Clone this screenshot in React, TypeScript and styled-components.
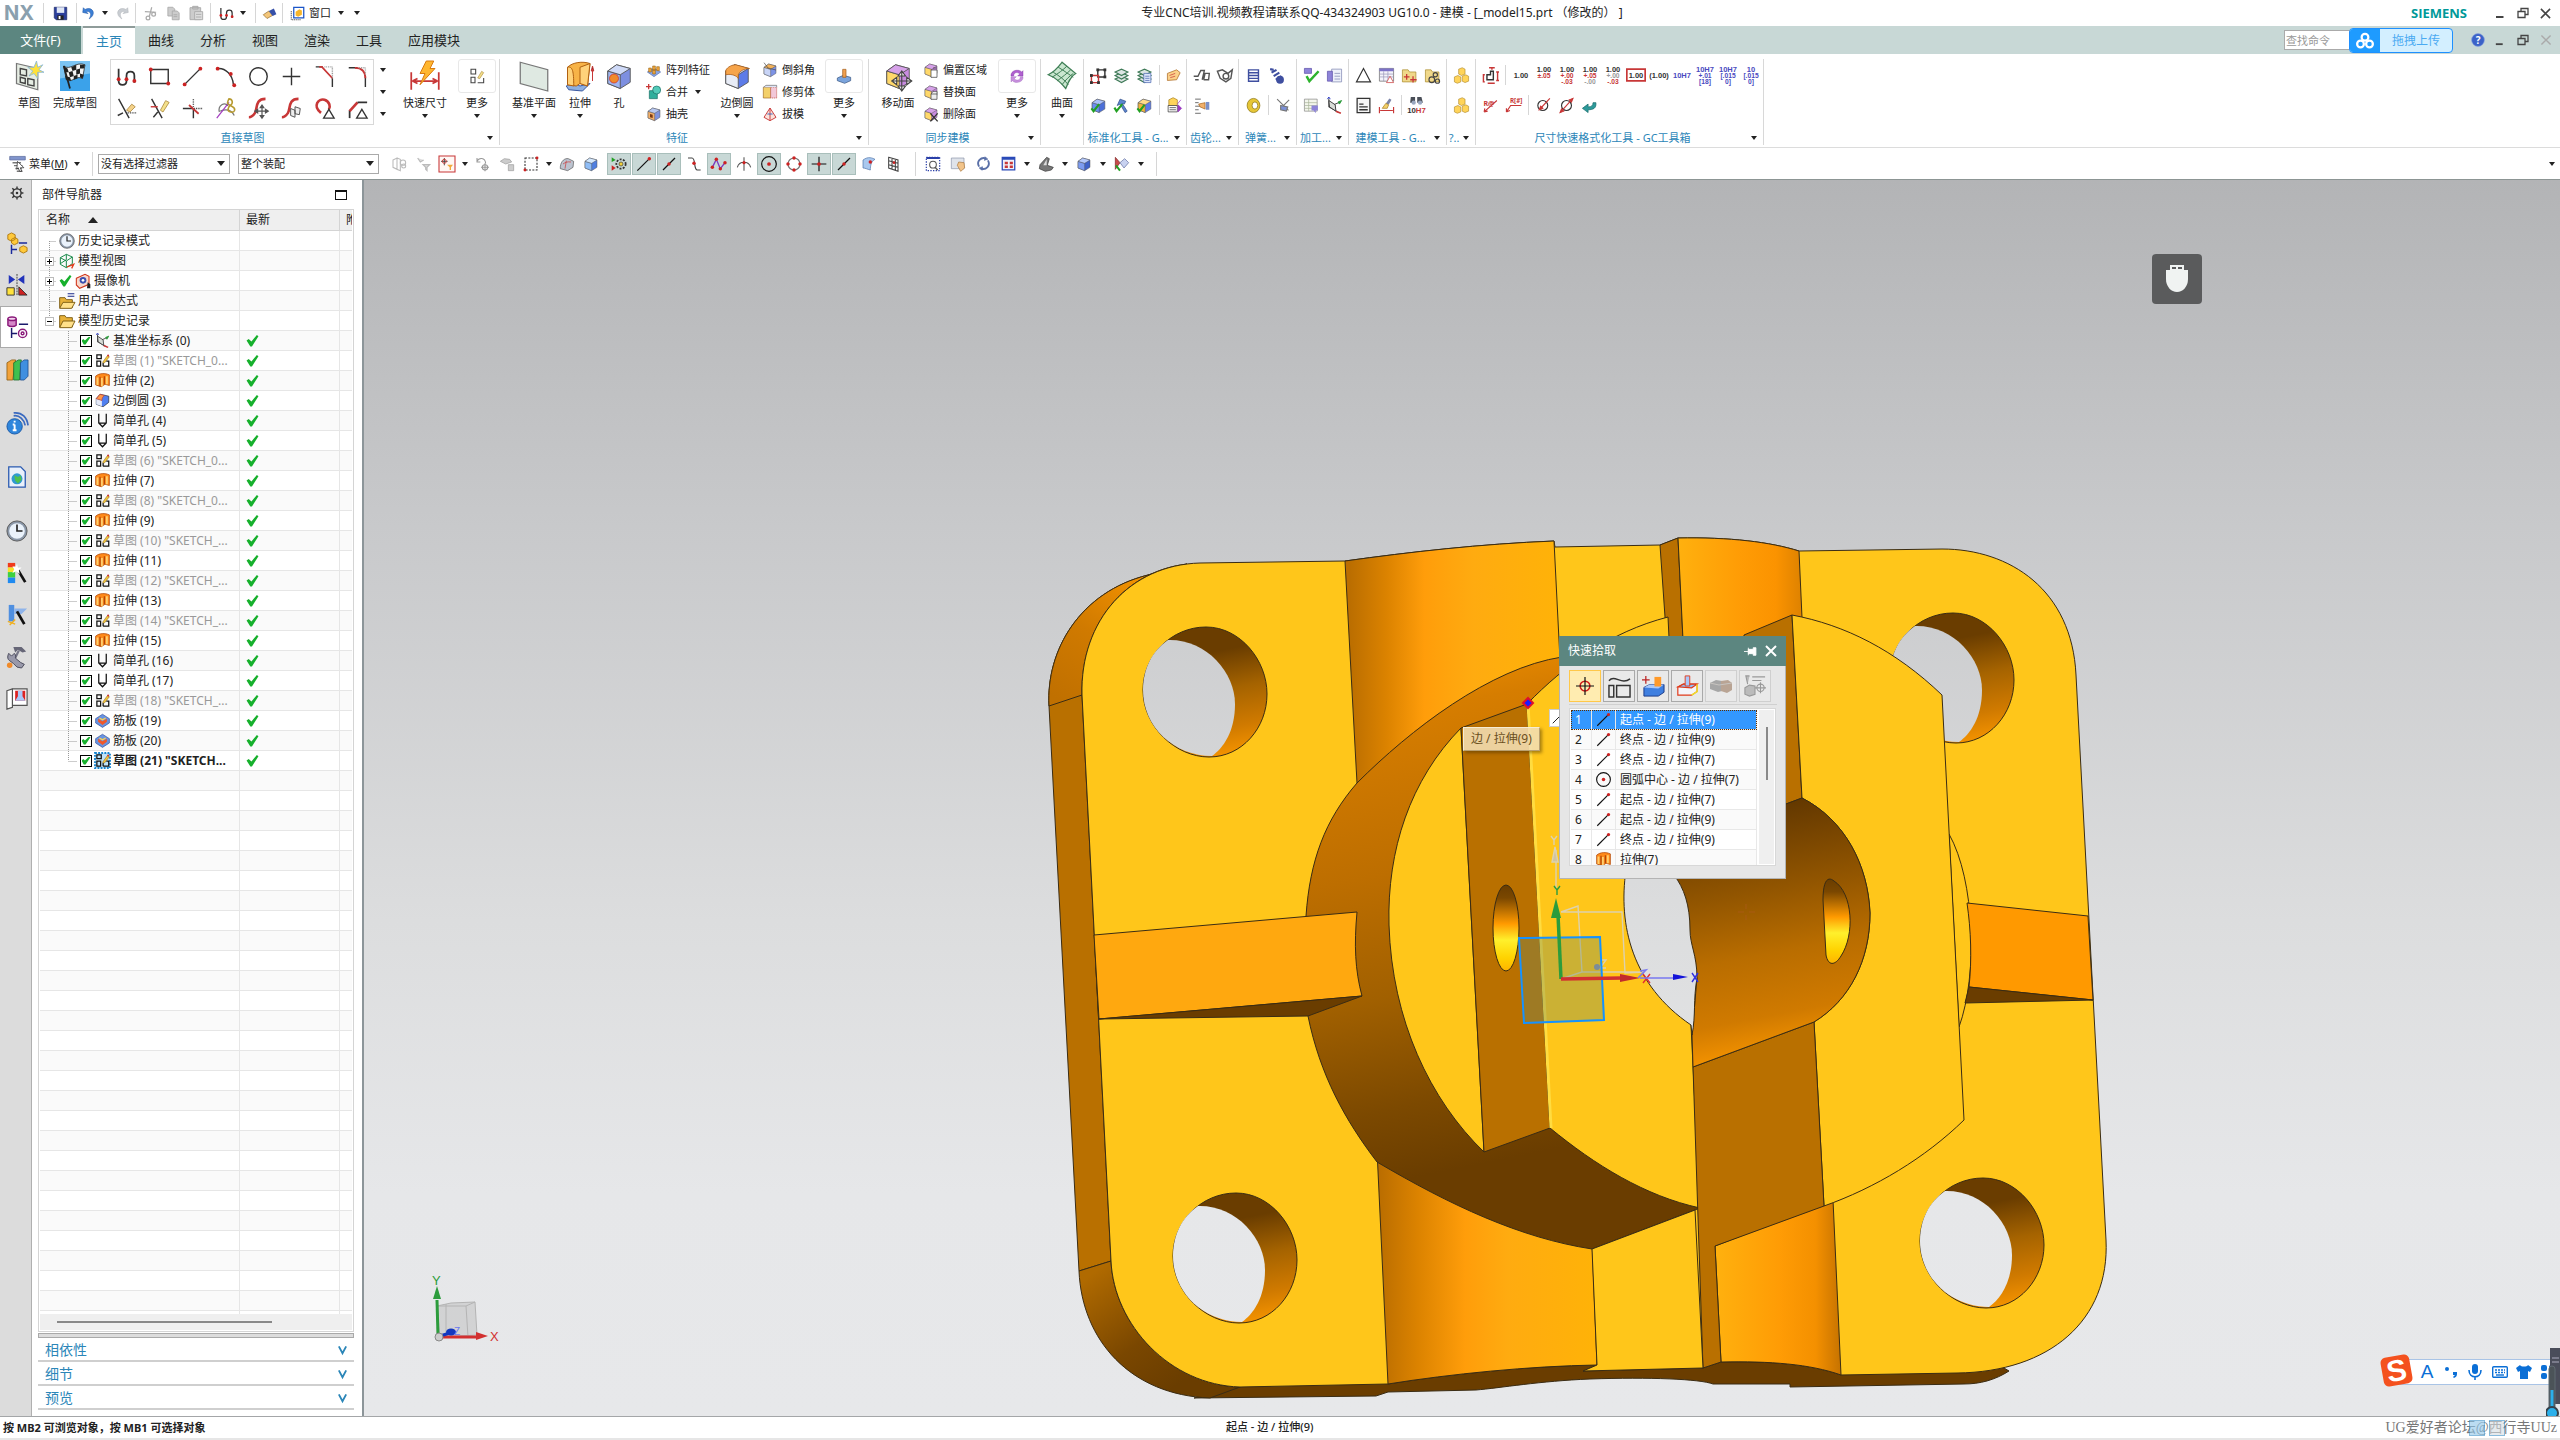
import React from "react";
import styled, { createGlobalStyle, css } from "styled-components";

const Global = createGlobalStyle`
  html, body, #root { height: 100%; }
  body { margin: 0; overflow: hidden; background: #fff; }
  *, *::before, *::after { box-sizing: border-box; }
  body, button, input, select, table {
    font-family: "Noto Sans", "Noto Sans CJK SC", sans-serif;
    font-size: 11px; line-height: 16px; color: #222;
  }
  button { border: 0; background: none; padding: 0; }
`;

/* ---------- icon drawings, each on a 24 x 24 grid ---------- */
const K = "#333";
const R = "#c83737";
const st = (stroke: string, strokeWidth = 1.6) => ({ fill: "none", stroke, strokeWidth });
const dot = (x: number, y: number, r = 2.2) => <circle cx={x} cy={y} r={r} fill="#cc2222" stroke="none" />;
const cube = (a: string, b: string, c: string) => (
  <g stroke="#555" strokeWidth=".7" strokeLinejoin="round">
    <path d="M3 8l7-5 11 3v11l-8 5-10-4z" fill={a} />
    <path d="M3 8l10 3v11l-10-4z" fill={b} />
    <path d="M3 8l7-5 11 3-8 5z" fill={c} />
  </g>
);
const binder = (c: string) => <g fill="#dde6e4" stroke={c} strokeWidth="1.6">{[17, 12, 7].map((y) => <path key={y} d={`M3 ${y}l9-4 9 4-9 5z`} />)}</g>;
const dimText = (main: string, color = K, a?: string, b?: string, ac = R, bc = R) => (
  <g fontFamily="Liberation Sans" fontWeight="700" textAnchor="middle">
    <text x="12" y={a ? 8 : 15} fontSize="9" fill={color}>{main}</text>
    {a && <text x="12" y="16" fontSize="8" fill={ac}>{a}</text>}
    {b && <text x="12" y="23" fontSize="8" fill={bc}>{b}</text>}
  </g>
);
const sketchGlyph = (
  <g {...st("#111", 2)}>
    <path d="M3 3h7v6H3zM3 13h6v8H3zM13 21h9v-8h-4M13 21v-5" />
    <path d="M12 15l8-11 3 2-8 10z" fill="#f6c63a" stroke="#7a5a10" strokeWidth=".8" />
    <circle cx="21" cy="4" r="1.6" fill="#c33" stroke="none" />
  </g>
);

const icons: Record<string, React.ReactNode> = {
  save: <g><path d="M2 2h20v20H5l-3-3z" fill="#2b3f9c" stroke="#14205c" /><path d="M6 2h12v9H6z" fill="#dfe6f5" /><path d="M7 15h10v7H7z" fill="#222" /><path d="M9 16h3v5H9z" fill="#fff" /></g>,
  undo: <path d="M3 11l1-8 3 3c7-4 15 0 14 7-1 5-4 7-7 9 3-5 4-9 0-12-2-1-4-1-5 0l3 3z" fill="#3c7fd6" stroke="#2259a8" />,
  redo: <path d="M21 11l-1-8-3 3C10 2 2 6 3 13c1 5 4 7 7 9-3-5-4-9 0-12 2-1 4-1 5 0l-3 3z" fill="#c9cdd2" stroke="#b3b7bc" />,
  cut: <g {...st("#aaa", 2)}><path d="M14 2l-4 15M3 9l18 1" /><circle cx="8" cy="19" r="3" /><circle cx="17" cy="13" r="3" /></g>,
  copy: <g fill="#ccc" stroke="#aaa" strokeWidth="1.4"><path d="M3 2h8l3 3v11H3z" /><path d="M10 8h8l3 3v11H10z" /><path d="M12 14h6M12 17h6" /></g>,
  paste: <g fill="#ccc" stroke="#aaa" strokeWidth="1.4"><path d="M3 4h16v18H3zM7 2h8v4H7z" /><path d="M10 10h12v12H10z" fill="#ddd" /><path d="M12 14h8M12 18h8" /></g>,
  profile: <g {...st(K, 2)}><path d="M3 3v14c0 6 9 6 9 0v-6c0-6 9-6 9 0v8" />{dot(3, 15)}{dot(12, 15)}{dot(21, 17)}</g>,
  eraser: <g><path d="M2 14l9-6 6 7-9 5z" fill="#f3c67a" stroke="#8a6020" /><path d="M11 8l8-4 4 9-6 3z" fill="#3650a8" /></g>,
  window: <g><path d="M2 8v14h16" {...st("#444", 1.4)} strokeDasharray="2 1" /><path d="M6 2h16v17H6z" fill="#fff" stroke="#1b55c8" strokeWidth="2" /><path d="M9 9l6-4 4 2v7l-6 3-4-2z" fill="#f7b52a" /></g>,
  sketch: <g><path d="M2 2l17 4v17L2 18z" fill="#e6ede4" stroke="#777" /><path d="M5 6l5 1v5l-5-1zM5 13l4 1v4l-4-1zM11 14l5 1v5l-5-1z" {...st("#444", 1.1)} /><path d="M18 0l1 5 4-2-3 4 4 2-5 0 0 5-3-4-4 2 3-4-4-3 5 0z" fill="#ffe23c" stroke="#8bb8d8" strokeWidth=".7" /></g>,
  finish: <g><path d="M0 0h24v24H0z" fill="#3ba2ea" /><path d="M0 0h24v10L0 14z" fill="#7cc4f3" /><path d="M3 4c5 4 10-4 17-1l-2 11c-6-3-8 4-13 1z" fill="#f4f4f4" stroke="#222" strokeWidth=".6" /><path d="M3 4l3 2 1 3-3 0zM9 5l4-2 0 4-3 1zM16 3l4 0-1 3-3 0zM7 9l3-1 1 4-3 1zM13 7l3-1 0 4-3 1zM4 12l4 1 1 3-4-1zM11 12l3-1 0 3-3 1zM16 10l3 1-1 3-2-1z" fill="#222" /><path d="M3 4l5 18" {...st("#222", 1.4)} /></g>,
  rect: <g {...st(K)}><path d="M2 4h20v16H2z" />{dot(2, 4)}{dot(22, 20)}</g>,
  line: <g {...st(K)}><path d="M3 21L21 3" />{dot(3, 21)}{dot(21, 3)}</g>,
  segment: <path d="M3 21L21 3" {...st("#111")} />,
  arc: <g {...st(K)}><path d="M3 3c9-1 17 7 18 18" />{dot(3, 3)}{dot(22, 22)}{dot(18, 9)}</g>,
  circle: <circle cx="12" cy="12" r="10" {...st(K)} />,
  plus: <path d="M12 2v20M2 12h20" {...st(K)} />,
  fillet: <g {...st(K)}><path d="M2 1h8M21 14v10" /><path d="M6 1h3l12 13" stroke={R} strokeWidth="2" /><path d="M12 1h9v12" stroke="#999" strokeDasharray="1 1" /></g>,
  corner: <g {...st(K)}><path d="M2 2h10M21 12v12" /><path d="M9 2c8 0 12 4 12 12" stroke={R} strokeWidth="2" /><path d="M14 2h7v9" stroke="#999" strokeDasharray="1 1" /></g>,
  trim: <g {...st(K)}><path d="M3 1l12 22M2 20l6-3" /><path d="M12 17h11" strokeDasharray="1 1" /><path d="M12 14l6-7 4 3-6 6z" fill="#f4d28a" stroke="#a07828" strokeWidth=".8" /></g>,
  extend: <g {...st(K)}><path d="M3 1l12 22M5 22l5-6" /><path d="M2 10h8" stroke={R} /><path d="M13 14l6-11 4 2-7 11z" fill="#f3e08a" stroke="#a07828" strokeWidth=".8" /></g>,
  mkcorner: <g {...st(K)}><path d="M13 12v11M1 12h11" /><path d="M8 8l11 10" stroke={R} strokeWidth="2" /><path d="M13 1v10M14 12h9" strokeDasharray="1 1" /></g>,
  loop: <g {...st("#777", 1.4)}><path d="M5 16C3 8 11 4 15 9M6 15c8-3 13-1 16 5" /><path d="M2 23L16 5" stroke="#a33ac0" /><path d="M16 1c4 0 5 5 2 7s-5 7 0 8 6-4 2-6-7-3-5-7z" stroke="#b79a30" strokeWidth="1.8" /></g>,
  moveCurve: <g><path d="M20 1C8 1 11 12 8 17c-2 3-4 5-7 5" {...st(R, 3)} /><path d="M16 8v15M8 15h15M16 8l-2 3h4zM16 23l-2-3h4zM8 15l3-2v4zM23 15l-3-2v4z" fill="#555" stroke="#555" strokeWidth="1.4" /></g>,
  offsetCurve: <g><path d="M20 1C8 1 11 12 8 17c-2 3-4 5-7 5" {...st(R, 3)} /><path d="M11 12l5 2v8l-5-2zM16 10l6 2-1 7-5-1z" fill="#eee" stroke="#444" /></g>,
  arcTri: <g><path d="M8 17C-2 9 5 0 12 2c6 2 7 8 5 11" {...st(R, 3)} /><path d="M17 13l6 10H11z" fill="#fff" stroke={K} strokeWidth="1.5" /></g>,
  chamTri: <g><path d="M3 23v-9" {...st(K, 2)} /><path d="M3 15L12 5" {...st(R, 3)} /><path d="M12 5h11" {...st(K, 2)} /><path d="M17 13l6 10H11z" fill="#fff" stroke={K} strokeWidth="1.5" /></g>,
  rapidDim: <g><path d="M1 9v14M23 9v14M2 16h20M2 16l4-2M2 16l4 2M22 16l-4-2M22 16l-4 2" {...st(R, 1.4)} /><path d="M13 0h6l-3 6h4L8 19l4-9H8z" fill="#ffb62e" stroke="#d87a10" strokeWidth=".8" /></g>,
  more: <g {...st("#444", 1.6)}><path d="M3 2h7v7H3zM3 14h6v8H3zM13 22h9v-7" /><path d="M13 15l6-10 3 2-6 9z" fill="#f3e08a" stroke="#a07828" strokeWidth=".8" /></g>,
  datum: <path d="M1 1l22 6v17L1 18z" fill="#dfe9e2" stroke="#777" />,
  extrude: <g stroke="#b06010" strokeWidth=".8"><path d="M1 20l5-3 6 3 8-2-6 6-11-1z" fill="#8fb0e0" stroke="#3a58a0" /><path d="M2 5c4-4 12-5 18-3l-2 18-6-2-3 2-7-1z" fill="#f7b347" /><path d="M2 5c4-1 5 3 5 15l-5-1zM12 5l8-3-2 18-6-2z" fill="#ffd27a" /><path d="M22 16V6M22 4l-1 4h2z" stroke={R} /></g>,
  hole: <g>{cube("#7d8fe0", "#9fb6f2", "#cfdaf8")}<circle cx="8" cy="14" r="3.6" fill="#f08a2a" stroke="#c33" strokeWidth=".6" /></g>,
  pattern: <g fill="#f2a63a" stroke="#8a5a10" strokeWidth=".8"><path d="M2 15l10-6 10 6-10 7z" fill="#8aa7e4" stroke="#4560a8" /><path d="M4 9h4v6H4zM10 6h4v6h-4zM10 12h4v6h-4zM16 7h4v6h-4z" /></g>,
  unite: <g><path d="M5 10h12v12H5z" fill="#2fae9c" stroke="#136a60" /><circle cx="16" cy="9" r="6" fill="#53cbb9" stroke="#136a60" /><path d="M4 0v8M0 4h8" {...st(R, 2)} /></g>,
  shell: <g>{cube("#7f93de", "#f3b06a", "#b8c8f2")}<path d="M6 12l4 1v5l-4-1z" fill="#7a3a14" /></g>,
  blend: <g>{cube("#5c7be8", "#e8ecf6", "#c8d6f8")}<path d="M3 8c0-2 4-5 8-5l11 3c-4 0-8 2-9 5v3c-1-2-5-4-10-3z" fill="#f6a44a" stroke="#a85c18" strokeWidth=".6" /></g>,
  chamfer: <g>{cube("#7d93e6", "#c8d4f6", "#f2b25a")}<path d="M3 1l6 8 12 3" {...st("#444", 1)} /></g>,
  trimBody: <g><path d="M2 5h11v16H2z" fill="#f3d06a" stroke="#a06a20" /><path d="M13 5h9v16h-9z" fill="#f2c8d8" stroke="#b43" strokeDasharray="2 1" /><path d="M2 5l4-3h16v3" fill="#dfe6f8" stroke="#666" /></g>,
  draft: <g fill="#fbe3dc" stroke={R} strokeWidth="1.4"><path d="M12 3l9 14-9 5-9-5z" /><path d="M12 3v19" /><path d="M8 12l8 0" stroke="#3465c0" /></g>,
  featMore: <g><path d="M2 15l9-4 11 3v5l-9 4-11-4z" fill="#7ba4dc" stroke="#33507c" /><path d="M10 2h5v12h-5z" fill="#f0a050" stroke="#a05a18" /></g>,
  moveFace: <g>{cube("#c88be0", "#ffd86a", "#d7a2ea")}<path d="M15 9v14M8 16h14M15 8l-3 4h6zM15 24l-3-4h6zM7 16l4-3v6zM23 16l-4-3v6z" fill="#eee" stroke="#444" strokeWidth=".9" /></g>,
  offRegion: <g>{cube("#c88be0", "#ffd86a", "#d7a2ea")}<path d="M12 12h9v11h-9zM15 9h6" fill="#fff" stroke="#333" /></g>,
  repFace: <g>{cube("#c88be0", "#ffd86a", "#d7a2ea")}<path d="M12 15h9v8h-9zM12 15l3-4h6v4" fill="#eee" stroke="#333" /></g>,
  delFace: <g>{cube("#c88be0", "#ffd86a", "#d7a2ea")}<path d="M11 11l11 12M22 11L11 23" {...st("#333", 2)} /></g>,
  syncMore: <g fill="#b060d0" stroke="#7a2fa0" strokeWidth=".6"><path d="M3 12C2 3 15 1 19 6l2-2v8h-8l3-3c-4-4-9-2-9 3z" /><path d="M21 13c1 9-12 11-16 6l-2 2v-8h8l-3 3c4 4 9 2 9-3z" opacity=".7" /></g>,
  surface: <g><path d="M1 11C7 8 9 5 12 1l11 9c-4 2-6 7-8 12C11 17 6 13 1 11z" fill="#c9e6cf" stroke="#3f7f56" /><path d="M5 9c5 3 9 6 12 10M9 5c5 3 9 6 12 8M4 13C9 10 13 7 16 4M8 16c4-3 8-6 11-9M12 19c3-4 6-7 9-9" {...st("#3f7f56", .8)} /></g>,
  snapBox: <g {...st("#333", 2)}><path d="M11 4h10v10H11z" /><path d="M2 12h10v10H2z" stroke={R} />{[[11, 4], [21, 4], [21, 14], [2, 12], [2, 22], [12, 22]].map(([x, y]) => <path key={`${x}-${y}`} d={`M${x - 1} ${y - 1}h2v2h-2z`} />)}</g>,
  layers: binder("#3f7a58"),
  layerList: <g>{binder("#3f7a58")}<path d="M11 9h10v13H11z" fill="#dce6fa" stroke="#4763b0" /><path d="M13 13h6M13 16h6M13 19h6" stroke="#4763b0" /></g>,
  tag: <g><path d="M2 9l13-5 5 4-5 10-13 1z" fill="#fbd18a" stroke="#a8651c" /><path d="M5 12l8-3M6 15l7-2" stroke={R} /></g>,
  blueTick: <g>{cube("#4b6fd8", "#6a8ef0", "#a9c0fa")}<path d="M2 16l3 4 8-10" {...st("#22a022", 3)} /></g>,
  hammerTick: <g><path d="M10 3l8 3-2 4-3-1 7 11-3 2-7-12-4 2z" fill="#5b86d0" stroke="#2a4a88" /><path d="M2 15l3 5 8-10" {...st("#22a022", 3)} /></g>,
  goldTick: <g>{cube("#5c7be8", "#f2b53a", "#ffdb8a")}<path d="M2 16l3 4 7-9" {...st("#22a022", 3)} /></g>,
  partEdit: <g><path d="M4 4l6-3 6 3v9H4z" fill="#ffd55a" stroke="#a8801c" /><path d="M3 12h13v9H3z" fill="#fff" stroke="#333" /><path d="M5 15h9M5 18h9" stroke="#333" /><path d="M16 10l5-6M17 21l5-5-5-5z" fill="#9a3ac0" stroke="#9a3ac0" /></g>,
  gear1: <g {...st("#555", 2)}><path d="M1 13h6l4-8h5l-3 13M15 18h7l1-9h-6l-2 9M3 18h5" /></g>,
  gear2: <g {...st("#555", 2)}><path d="M2 6l4 10 8 5 7-5 2-12-6 5-8-5z" /><circle cx="14" cy="13" r="4" /></g>,
  listHand: <g><path d="M3 3h8M3 8h5M3 13h8M3 18h5M3 23h8" stroke="#333" /><path d="M8 10l9-2v9l-7-3z" fill="#f2b06a" stroke="#a8641c" /><path d="M18 7h5v11h-5z" fill="#7b90c8" /></g>,
  spring: <g {...st("#3f4fa0", 2)}><path d="M5 4h14M5 8h14M5 12h14M5 16h14M5 20h14M5 3v18M19 3v18" /></g>,
  spring2: <g {...st("#3f4fa0", 3)}><path d="M3 3l5 1M5 8l7-4M8 13l8-5M11 18l8-5" /><circle cx="17" cy="18" r="4" fill="#3f4fa0" /></g>,
  disc: <g><ellipse cx="12" cy="12" rx="9" ry="10" fill="#e6c637" stroke="#8a7310" /><ellipse cx="14" cy="12" rx="4" ry="5" fill="#fff" stroke="#8a7310" /></g>,
  springCut: <g {...st("#777", 1.6)}><path d="M3 3l16 16M20 4L8 16" /><path d="M8 12l10 2-2 6-8-2z" fill="#7b90d8" /></g>,
  procTick: <g><path d="M2 2h10v7H2z" fill="#8d83d8" stroke="#5a4ea8" /><path d="M5 13l4 7L22 6" {...st("#2db32d", 3.4)} /></g>,
  procList: <g><path d="M8 3h14v18H8z" fill="#eef1fa" stroke="#7b84b0" /><path d="M12 9h8M12 13h8M12 17h8" stroke="#7b84b0" /><path d="M2 6h7v14H2z" fill="#8d83d8" stroke="#5a4ea8" /></g>,
  procTable: <g><path d="M2 3h18v17H2z" fill="#f3f6ec" stroke="#888" /><path d="M2 8h18M2 12h18M2 16h18M8 3v17" stroke="#a9b49a" /><path d="M12 12h9v7h-3v4l-3-4h-3z" fill="#8d83d8" /></g>,
  csys: <g {...st("#333", 1.3)}><path d="M4 2v12l14 8M4 14l16-7" /><path d="M4 5l9 6 1 9-9-6z" fill="#d9ddd8" /><path d="M17 7l5-2-3 5z" fill="#2a9a3a" stroke="#2a9a3a" /><path d="M14 20l7 3" stroke={R} strokeWidth="2.4" /><path d="M2 3l2-3 2 3" stroke="#2233cc" /></g>,
  tri: <path d="M12 2l10 19H2z" {...st(K, 1.6)} />,
  gridTri: <g><path d="M2 2h20v18H2z" fill="#f4f4fb" stroke="#666" /><path d="M2 2h20v4H2z" fill="#7d73c8" /><path d="M2 10h20M2 14h20M8 6v14M14 6v14" stroke="#9a96b8" /><path d="M17 13l5 9H12z" fill="#fff" stroke={R} /></g>,
  foldPts: <g><path d="M2 4h8l2 3h9v14H2z" fill="#f0d88a" stroke="#a88a2c" /><path d="M8 10v8M4 14h8M17 13v9M13 18h9" {...st(R, 1.8)} /></g>,
  foldLink: <g><path d="M2 4h8l2 3h9v14H2z" fill="#f0d88a" stroke="#a88a2c" /><circle cx="11" cy="18" r="4" {...st("#444")} /><circle cx="19" cy="20" r="3" {...st("#444")} /><circle cx="16" cy="11" r="3" {...st("#444")} /></g>,
  note: <g {...st(K, 1.8)}><path d="M3 2h18v20H3z" fill="#f5f5f5" /><path d="M6 10h6M6 14h12M6 18h12" /></g>,
  dimBrush: <g><path d="M2 14v9M22 14v9M3 19h18" {...st(R, 1.6)} /><path d="M16 2l3 2-4 7-4-2z" fill="#7b84a8" /><path d="M11 9l4 2-2 5H6z" fill="#f2d06a" stroke="#a8801c" /></g>,
  find: <g><path d="M4 0h6v8H3zM13 0h6l2 8h-8z" fill="#4a4f58" /><circle cx="8" cy="8" r="3" fill="#9aa8c0" /><circle cx="17" cy="8" r="3" fill="#9aa8c0" /><text x="12" y="23" fontSize="11" fontFamily="Liberation Sans" fontWeight="700" textAnchor="middle" fill={K}>10<tspan fill={R}>H7</tspan></text></g>,
  gold: <g fill="#ffd45a" stroke="#a8801c" strokeWidth=".8"><path d="M8 3l5-2 4 2v7l-5 2-4-2z" /><path d="M2 14l5-2 4 2v7l-5 2-4-2zM13 13l5-2 4 2v7l-5 2-4-2z" /></g>,
  dimFrame: <g {...st(K, 2)}><path d="M7 18V11h5V6h4v12z" /><path d="M10 1h8M14 1v3M2 12v8M1 11h3M1 21h3M22 7v12M20 7h4M20 19h4M8 23h10" stroke={R} /></g>,
  d1: dimText("1.00"),
  d2: dimText("1.00", K, "±.05"),
  d3: dimText("1.00", K, "+.00", "-.03"),
  d4: dimText("1.00", K, "+.05", "-.00", R, "#999"),
  d5: dimText("1.00", K, "+.00", "-.03", "#999"),
  d6: <g><path d="M1 5h22v14H1z" {...st(R, 2)} />{dimText("1.00")}</g>,
  d7: <g>{dimText("(1.00)")}</g>,
  d8: dimText("10H7", "#4a4ac0"),
  d9: dimText("10H7", "#4a4ac0", "+.01", "[18]", "#4a4ac0", "#4a4ac0"),
  d10: dimText("10H7", "#4a4ac0", "[.015", "0]", "#4a4ac0", "#4a4ac0"),
  d11: dimText("10", "#4a4ac0", "[.015", "0]", "#4a4ac0", "#4a4ac0"),
  leader1: <g {...st(R, 1.6)}><path d="M3 21L21 5M3 21l1-5M3 21l5-1" /><text x="2" y="12" fontSize="10" fontWeight="700" stroke="none" fill={R}>R@</text></g>,
  leader2: <g {...st(R, 1.6)}><path d="M2 21l6-9h15M2 21l0-5M2 21l5-2" /><text x="7" y="9" fontSize="9" fontWeight="700" stroke="none" fill={R}>R[#]</text></g>,
  dia1: <g {...st(K, 1.6)}><circle cx="11" cy="12" r="7" /><path d="M6 18L21 2" stroke={R} /><path d="M6 18l5-2-3-3z" fill={R} stroke={R} /></g>,
  dia2: <g {...st(K, 1.6)}><circle cx="12" cy="12" r="7" /><path d="M3 22L21 2" stroke={R} /><path d="M3 22l5-2-3-3zM21 2l-5 2 3 3z" fill={R} stroke={R} /></g>,
  back: <path d="M21 8c1 8-4 10-11 10v4l-8-6 8-6v4c5 0 7-2 7-6z" fill="#2c9a9a" stroke="#176a6a" />,
  menu: <g><path d="M1 2h22v5H1z" fill="#8094cc" stroke="#5a6a9c" /><path d="M5 11h12M7 15h12M9 19h9M11 23h8" {...st("#777", 2)} /><path d="M12 9l9 9-5 0 2 5-3 0-2-5-2 2z" fill="#fff" stroke="#222" /></g>,
  cubeGray: <g {...st("#bbb", 1.6)}><path d="M3 6l6-3v17l-6-3zM9 3l5 2v17l-5-2z" /><circle cx="18" cy="10" r="4" /><circle cx="19" cy="15" r="3" /></g>,
  filterGray: <g {...st("#bbb", 1.8)}><path d="M4 3l4 6 5-3M12 13h10l-4 4v5l-2-2v-3z" fill="#ddd" /></g>,
  filterRed: <g><path d="M0 0h24v24H0z" fill="#fff7f4" stroke={R} strokeWidth="1.6" /><path d="M8 3v11M3 8h10" {...st("#444", 1.4)} /><circle cx="8" cy="8" r="3" {...st(R, 1.4)} /><path d="M12 13h9l-3 4v4h-2v-4z" fill="#f2a83a" /></g>,
  undoGray: <g {...st("#999", 1.6)}><path d="M3 8c3-6 12-6 13 3M3 3v6h5M15 11v12M9 17h12" /><circle cx="15" cy="17" r="4" /></g>,
  handGray: <g fill="#ccc" stroke="#999"><path d="M2 8l6-4 8 1 3 4-9 3z" /><path d="M14 13h8v9h-8z" /></g>,
  marquee: <g><path d="M3 3h18v18H3z" {...st("#333", 1.6)} strokeDasharray="3 2" />{dot(3, 21)}{dot(21, 3)}</g>,
  bodyGray: <g><path d="M2 16C3 7 9 3 14 4l8 4-1 9-8 5-11-3z" fill="#bcc3cf" stroke="#555" /><path d="M6 12c3-2 6-4 12-3M9 19l2-12" {...st("#c33", 1)} /></g>,
  cubeBlue: cube("#4f7fe0", "#8fbdf6", "#d4e8fc"),
  snapAll: <g><circle cx="15" cy="12" r="7" {...st("#333", 2.6)} strokeDasharray="3 2" /><circle cx="15" cy="12" r="3" fill="#f2d23a" stroke="#333" /><path d="M1 2v7l6-3z" fill="#22a022" /><path d="M1 14v8l6-4z" fill="#cc2222" /></g>,
  snapEnd: <g {...st("#111", 1.8)}><path d="M2 22L19 5" />{dot(20, 4, 2.6)}</g>,
  snapMid: <g {...st("#111", 1.8)}><path d="M3 21L21 3" />{dot(12, 12, 2.6)}</g>,
  snapCurve: <g {...st("#444", 1.8)}><path d="M3 3h6c6 0 2 18 8 18h5" />{dot(12, 11, 2.6)}</g>,
  snapPole: <g {...st("#7a3ac0", 2)}><path d="M2 17L8 5l6 14 7-9" />{dot(8, 5, 2.6)}{dot(2, 17, 2.6)}{dot(14, 19, 2.6)}{dot(21, 10, 2.6)}</g>,
  snapCross: <g {...st("#555", 1.6)}><path d="M12 2v20M2 17c3-10 17-10 20 0" />{dot(12, 10, 2.4)}</g>,
  snapCenter: <g {...st("#111", 1.8)}><circle cx="12" cy="12" r="11" />{dot(12, 12, 2.8)}</g>,
  snapQuad: <g {...st("#777", 1.8)}><circle cx="12" cy="12" r="9" />{dot(12, 3, 2.6)}{dot(12, 21, 2.6)}{dot(3, 12, 2.6)}{dot(21, 12, 2.6)}</g>,
  snapPoint: <g {...st("#111", 1.8)}><path d="M12 1v22M1 12h22" />{dot(12, 12, 2.8)}</g>,
  snapFace: <g><path d="M3 6c8-6 14-3 18-1-6 3-7 10-7 16-4-1-8-3-11-3z" fill="#a9c8ee" stroke="#4a6fa8" />{dot(14, 9, 2.6)}</g>,
  snapGrid: <g {...st("#444", 1.6)}><path d="M4 2l14 4v17L4 18zM9 3v17M14 5v17M4 7l14 4M4 13l14 4" />{dot(12, 10, 2)}</g>,
  fit: <g><path d="M2 2h20v20H2z" {...st("#2a3fa8", 1.8)} strokeDasharray="2 2" /><path d="M2 3h20" {...st("#2a3fa8", 3)} /><circle cx="12" cy="13" r="5" fill="#fff" stroke="#555" strokeWidth="1.6" /><path d="M15 17l4 4" {...st("#555", 2)} /></g>,
  pan: <g><path d="M2 3h19v16H2z" fill="#dfe3ea" stroke="#8a93a8" /><path d="M11 14l2-5 8 1 1 8-6 5z" fill="#f2c48a" stroke="#a8743a" /></g>,
  rotate: <g fill="none" stroke="#5a70a8" strokeWidth="3"><path d="M5 17C0 9 8 1 16 4M19 7c5 8-3 16-11 13" /><path d="M14 1l5 4-6 2M10 23l-5-4 6-2" strokeWidth="1" fill="#5a70a8" /></g>,
  layout: <g><path d="M2 2h20v20H2z" fill="#eef2fb" stroke="#2a4ab8" strokeWidth="2" /><path d="M2 4h20" stroke="#2a4ab8" strokeWidth="4" /><path d="M6 9h5v4H6zM14 9h5v4h-5zM6 15h5v4H6zM14 15h5v4h-5z" fill={R} /></g>,
  shadeMode: <g><path d="M3 13L13 2l4 2-3 10 9 3-3 4-9 2-9-4z" fill="#777" stroke="#333" /><path d="M8 14l5-9v9z" fill="#ddd" /></g>,
  shaded: cube("#3f62c8", "#7d9cf0", "#b4c8fa"),
  section: <g><path d="M2 2l7 8-7 10z" fill="#c84a4a" stroke="#7a2020" /><path d="M9 10l7-6 6 6-7 8z" fill="#c8d2f0" stroke="#5a6a9c" /><path d="M3 14l6 8" {...st("#22a022", 3)} /></g>,
  asm: <g><g fill="#ffc93a" stroke="#b07a10"><path d="M2 3l4-2 4 2v5l-4 2-4-2zM6 8l4-2 3 2v4l-4 2-3-2zM15 17l4-2 4 2v4l-4 2-4-2z" /></g><path d="M6 14v10M6 19h6M14 12h9" {...st("#1a2a9c", 1.6)} /></g>,
  constraint: <g><path d="M3 1v10l7-5zM20 1v10l-7-5z" fill="#2233bb" /><path d="M12 0v24" stroke="#333" strokeDasharray="2 1" /><path d="M1 15h8v8H1z" fill="#ffe23c" stroke="#333" /><path d="M14 14v9h9z" fill="#c22" stroke="#333" /></g>,
  partNav: <g {...st("#8a1a7a", 1.6)}><path d="M1 3v7c2 2 7 2 9 0V3" fill="#d488c8" /><ellipse cx="5.500" cy="3" rx="4.500" ry="2" fill="#f4d4f0" /><circle cx="17" cy="19" r="4.500" /><circle cx="17" cy="19" r="1.500" /><path d="M5 13v11M5 19h6M13 9h10" stroke="#1a1a6c" /></g>,
  books: <g strokeWidth=".8"><path d="M1 5l5-3h4l-3 21H1z" fill="#f2a23a" stroke="#8a5a10" /><path d="M8 5l5-3h3l-2 21H8z" fill="#3fc04f" stroke="#1a6a2a" /><path d="M15 5l4-3h4v17l-4 4h-4z" fill="#3f8fe0" stroke="#1a4a8a" /></g>,
  info: <g><circle cx="9" cy="15" r="8" fill="#2f86dc" stroke="#1a5aa8" /><path d="M9 9v2M9 13v6M7 19h4M7 13h2" {...st("#fff", 2)} /><path d="M8 4c6-1 11 4 12 10M8 1c9-1 14 5 15 13" {...st("#3a6ac0", 1.8)} /></g>,
  globe: <g><path d="M3 1h13l5 5v17H3z" fill="#e9f0fb" stroke="#2a5ab0" strokeWidth="1.4" /><circle cx="12" cy="14" r="6" fill="#2f9ad0" /><path d="M9 10l4 2 3-2 1 5-4 4-3-3z" fill="#4fc04f" /></g>,
  clock: <g><circle cx="12" cy="12" r="11" fill="#8a97a8" stroke="#555" /><circle cx="12" cy="12" r="8.500" fill="#eaf2fb" /><path d="M12 5v7h6" {...st("#222", 1.8)} /></g>,
  rainbow: <g><path d="M2 1h8v5H2z" fill="#f03a1a" /><path d="M2 6h8v5H2z" fill="#f6e02a" /><path d="M2 11h8v6H2z" fill="#3fd03f" /><path d="M2 17h8v6H2z" fill="#1f8af0" /><path d="M12 7l9 15" {...st("#111", 3)} /><path d="M12 2l1 4 4 0-3 3 1 4-4-3-4 2 2-4-2-3h4z" fill="#fff" /></g>,
  wand: <g><path d="M3 1h6v18H3z" fill="#4f8fe0" /><path d="M9 5h14l-6 6H9z" fill="#8fb4ea" /><path d="M12 8l8 14" {...st("#111", 3)} /><path d="M2 19l8 3M4 23l6-6" {...st("#f0b020", 1.6)} /></g>,
  tools: <g><path d="M8 1h9l5 5-4 1-5-3-3 3z" fill="#667" /><path d="M14 5l-4 8" {...st("#778", 2.4)} /><path d="M3 8l3 3 2-2 1-1c2 2 2 4 1 5l6 5 4 2-3 4-5-1-4-4-4-3c-2-1-3-4-1-8z" fill="#99a" stroke="#445" /><circle cx="4" cy="21" r="3" fill="#f08a2a" /></g>,
  roles: <g><path d="M1 3l6-2v20l-6 2zM7 1h16v18H7z" fill="#fff" stroke="#555" strokeWidth="1.3" /><path d="M10 3h11v11H10z" fill="#d22" /><path d="M13 3h5v6l3 5H10l3-5z" fill="#a9c8f8" /></g>,
  gearSmall: <g {...st("#333", 2.4)}><circle cx="12" cy="12" r="7" /><circle cx="12" cy="12" r="1" /><path d="M12 1v4M12 19v4M1 12h4M19 12h4M4 4l3 3M17 17l3 3M20 4l-3 3M7 17l-3 3" /></g>,
  views: <g {...st("#1a8a4a", 1.5)}><path d="M2 7l9-5 9 4v10l-9 6-9-5zM2 7l9 5 9-6M11 12v10M11 2v8l-9 6" /><path d="M12 21l10-4-3 6" stroke="#e03a1a" strokeWidth="2" /></g>,
  camera: <g><path d="M2 8l13-6 6 3v12l-14 6-5-5z" fill="#f8d8cc" stroke="#d0341a" strokeWidth="1.6" /><circle cx="12" cy="11" r="5" fill="#3a50b0" /><circle cx="12" cy="11" r="2" fill="#fff" /><path d="M19 14l4 3v6h-5z" fill="#222" /></g>,
  folder: <g><path d="M1 4h8l2 3h9v14H1z" fill="#e8b23a" stroke="#7a5a10" strokeWidth="1.4" /><path d="M1 22l5-10h18l-5 10z" fill="#ffe08a" stroke="#7a5a10" strokeWidth="1.4" /></g>,
  folderEq: <g><path d="M1 7h8l2 3h9v12H1z" fill="#e8b23a" stroke="#7a5a10" strokeWidth="1.4" /><path d="M1 23l5-9h18l-5 9z" fill="#ffe08a" stroke="#7a5a10" strokeWidth="1.4" /><path d="M13 1h10M13 5h10" {...st("#1a2a8a", 1.6)} /></g>,
  skt: sketchGlyph,
  sktOn: <g><path d="M0 0h24v24H0z" fill="#bfe2f8" stroke="#1a86d0" strokeWidth="3" strokeDasharray="3 2" />{sketchGlyph}</g>,
  ext: <g stroke="#b0480a" strokeWidth="1.2"><path d="M1 5c6-5 15-5 22-2v17l-7-2-6 4-9-3z" fill="#ff8a1a" /><path d="M4 7v12M11 8v13M19 5v13" stroke="#ffd070" strokeWidth="3" /><path d="M8 6v15M15 5v13" strokeWidth="2" /></g>,
  rbld: <g><path d="M2 9l6-7 14 3v10l-9 7-11-4z" fill="#4f7ff0" stroke="#222" /><path d="M2 9l9 3v9l-9-3z" fill="#e6ebf8" /><path d="M2 9l6-7 7 2c-3 2-4 5-4 8z" fill="#ff9a4a" stroke="#b33" /></g>,
  drill: <path d="M6 1v15l6 6 6-6V1M6 16h12" {...st("#111", 2)} />,
  rib: <g><path d="M1 9l11-7 11 7v7l-11 7-11-7z" fill="#6a94e0" stroke="#2a4a98" /><path d="M5 9l7 4 7-4v5l-7 5-7-5z" fill="#f0582a" /><path d="M7 8l5 3 5-3" {...st("#ffd24a", 2)} /></g>,
  qpTarget: <g {...st("#111", 1.6)}><circle cx="12" cy="12" r="6.500" stroke="#d01818" strokeWidth="2" /><path d="M12 0v24M0 12h24" /></g>,
  qpCurve: <g {...st("#333", 1.5)}><path d="M1 6c6-7 13 5 22-2M1 11h5v12H1zM9 11h14v12H9z" /></g>,
  qpFeat: <g><path d="M2 13l6-3h15v8l-6 4H2z" fill="#3f7fe0" stroke="#1a3a88" /><path d="M2 13l6-3h15l-6 4z" fill="#a9c8fa" /><path d="M13 2h7v10h-7z" fill="#ff9a2a" /><path d="M4 1v8M0 5h8" {...st("#b22", 1.3)} /></g>,
  qpBody: <g><path d="M2 13l6-3h15v8l-6 4H2z" fill="#f4f4fa" stroke="#e03a1a" strokeWidth="1.3" /><path d="M2 13l6-3h15l-6 4z" fill="#8fc0fa" stroke="#e03a1a" strokeWidth="1.3" /><path d="M10 1h5v11h-5z" fill="#a9c8fa" stroke="#e03a1a" /><path d="M17 22l6-4v-8" {...st("#f0e02a", 1.6)} /></g>,
  qpComp: <g><path d="M1 9l6-3 6 1v10l-4 1-8-3z" fill="#a6a6a6" /><path d="M12 7l7-1 4 3v7l-5 3-6-2z" fill="#b9a494" /><path d="M1 9l9 2 13-2" {...st("#c8c4c0", 1)} /></g>,
  qpPmi: <g {...st("#999", 1.2)}><path d="M1 14l5-3 6 1v9l-6 2-5-2zM4 10L2 1l4 0M9 2h14M9 6h10" fill="#bbb" /><circle cx="18" cy="14" r="4" /><path d="M18 8v12M12 14h12" /></g>,
  pin: <path d="M0 12h8M8 5v14M8 8h9V5h5v14h-5v-3H8z" fill="#fff" stroke="#fff" strokeWidth="1.6" />,
  help: <g><circle cx="12" cy="12" r="11" fill="#3b62c8" stroke="#8aa4e0" /><text x="12" y="18" fontSize="17" fontWeight="700" textAnchor="middle" fill="#fff">?</text></g>,
  min: <path d="M4 20h15" {...st("#444", 4)} />,
  restore: <path d="M8 9V3h14v12h-6M2 9h14v12H2z" {...st("#444", 2.6)} />,
  close: <path d="M2 2l20 20M22 2L2 22" {...st("#444", 3.4)} />,
  closeDim: <path d="M1 1l22 22M23 1L1 23" {...st("#aaa", 3.4)} />,
  cloud: <g {...st("#fff", 3)}><circle cx="12" cy="7" r="4.500" /><circle cx="6" cy="16" r="4.500" /><circle cx="18" cy="16" r="4.500" /></g>,
  chevron: <path d="M4 3l8 15 8-15" {...st("#2b86b8", 4)} />,
};

const Svg = styled.svg<{ $s: number }>`
  display: block; flex: none; overflow: visible;
  width: ${(p) => p.$s}px; height: ${(p) => p.$s}px;
`;
const Icon = ({ n, s = 18 }: { n: string; s?: number }) => (
  <Svg $s={s} viewBox="0 0 24 24" aria-hidden="true">{icons[n]}</Svg>
);

const Caret = styled.i`
  flex: none; width: 0; height: 0; margin: 0 3px;
  border: 3px solid transparent; border-top: 4px solid #222; border-bottom: 0;
`;

/* ---------- frame ---------- */
const Page = styled.div`display: flex; flex-direction: column; height: 100vh; overflow: hidden; background: #fff;`;
const Rule = styled.span<{ $h?: number; $m?: number }>`flex: none; width: 1px; height: ${(p) => p.$h || 20}px; background: #d6d6d6; margin: 0 ${(p) => p.$m || 5}px;`;
const Spacer = styled.span`flex: 1;`;

const TitleBar = styled.header`position: relative; display: flex; align-items: center; height: 26px; flex: none; padding: 0 8px 0 4px;`;
const Brand = styled.strong`width: 34px; font: 700 20px/26px Inter, sans-serif; color: #8aa0ae;`;
const Tool = styled.button<{ $w?: number }>`
  display: flex; align-items: center; justify-content: center; height: 22px; width: ${(p) => p.$w || 24}px; flex: none;
`;
const WindowMenu = styled.button`display: flex; align-items: center; gap: 4px; margin-left: 2px;`;
const Title = styled.h1`
  position: absolute; left: 0; right: 0; top: 0; margin: 0 0 0 204px; text-align: center;
  font-size: 12px; line-height: 26px; font-weight: 400; pointer-events: none; white-space: pre;
`;
const Maker = styled.span`font: 700 13px/26px "Open Sans", sans-serif; color: #009999; margin-right: 26px;`;
const WinButtons = styled.div`display: flex; gap: 10px; align-items: center;`;

const TabBar = styled.nav`position: relative; display: flex; height: 28px; flex: none; background: #c8d8d6; padding-right: 8px;`;
const Tab = styled.button<{ $kind?: "file" | "on" | "wide" }>`
  width: ${(p) => (p.$kind === "file" ? 81 : p.$kind === "wide" ? 78 : 52)}px; font-size: 13px;
  ${(p) => p.$kind === "file" && css`background: #5c8680; color: #fff; margin-right: 2px;`}
  ${(p) => p.$kind === "on" && css`background: #fff; color: #2b86b8; border-top: 2px solid #8f9c9a;`}
`;
const TabTools = styled.div`display: flex; align-items: center; gap: 9px;`;
const Search = styled.input`
  width: 66px; height: 20px; border: 1px solid #aaa; background: #fff; padding: 0 1px; margin-right: 112px; border-radius: 0;
  &::placeholder { color: #999; opacity: 1; }
`;
const Upload = styled.button`
  position: absolute; right: 107px; top: 2px; display: flex; align-items: center; width: 104px; height: 25px;
  border: 1px solid #1e90ff; border-radius: 4px; background: #d3efff; overflow: hidden; color: #4aaaf2; font-size: 12px;
`;
const UploadMark = styled.span`display: grid; place-items: center; width: 30px; height: 25px; background: #1e9bff; margin-right: 12px;`;

/* ---------- ribbon ---------- */
const Ribbon = styled.section`display: flex; height: 94px; flex: none; padding-top: 5px; border-bottom: 1px solid #dcdcdc;`;
const Group = styled.section<{ $w: number }>`
  display: flex; flex-direction: column; flex: none; width: ${(p) => p.$w}px; height: 86px; border-right: 1px solid #d8d8d8;
`;
const GroupBody = styled.div<{ $pad?: number }>`display: flex; align-items: flex-start; height: 71px; padding-left: ${(p) => p.$pad || 0}px;`;
const GroupFoot = styled.footer`display: flex; align-items: center; height: 15px; padding: 0 3px 0 1px; color: #2b86b8;`;
const GroupName = styled.span`flex: 1; text-align: center; white-space: nowrap; line-height: 15px;`;
const BigBtn = styled.button<{ $w: number; $framed?: boolean }>`
  display: flex; flex-direction: column; align-items: center; width: ${(p) => p.$w}px; flex: none; white-space: nowrap; line-height: 14px;
  > span { display: grid; place-items: center; width: 38px; height: 34px; margin-bottom: 3px;
    ${(p) => p.$framed && css`border: 1px solid #e8e8e8; border-radius: 3px;`} }
  > i { margin-top: 4px; }
`;
const Big = ({ n, label, w, caret, framed }: { n: string; label: string; w: number; caret?: boolean; framed?: boolean }) => (
  <BigBtn $w={w} $framed={framed}>
    <span><Icon n={n} s={framed ? 16 : 30} /></span>{label}{caret && <Caret />}
  </BigBtn>
);
const Stack = styled.div<{ $w: number; $pad?: number }>`display: flex; flex-direction: column; width: ${(p) => p.$w}px; padding-left: ${(p) => p.$pad || 0}px; flex: none;`;
const RowBtn = styled.button`display: flex; align-items: center; gap: 4px; height: 22px; line-height: 16px; white-space: nowrap;`;
const Gallery = styled.div`
  display: grid; grid-template-columns: repeat(8, 33px); grid-template-rows: repeat(2, 32px); width: 264px; height: 66px;
  border: 1px solid #d8d8d8; margin-left: 10px; place-items: center; align-content: center; justify-content: center;
`;
const GalleryNav = styled.div`display: flex; flex-direction: column; justify-content: space-around; height: 66px; width: 18px; margin-right: 4px; align-items: center;`;
const MiniRows = styled.div`display: flex; flex-direction: column; gap: 8px; padding-top: 5px;`;
const MiniRow = styled.div`display: flex; align-items: center; height: 22px; padding-left: 3px;`;

const Mini = ({ rows }: { rows: string[][] }) => (
  <MiniRows>
    {rows.map((r, i) => (
      <MiniRow key={i}>
        {r.map((n, j) => (n === "|" ? <Rule key={j} $m={3} /> : <Tool key={j} $w={23} aria-label={n}><Icon n={n} s={n.match(/^d\d/) ? 20 : 17} /></Tool>))}
      </MiniRow>
    ))}
  </MiniRows>
);

/* ---------- selection bar ---------- */
const SelBar = styled.section`display: flex; align-items: center; height: 32px; flex: none; border-bottom: 1px solid #8c9594; padding: 0 2px 0 9px;`;
const MenuBtn = styled.button`display: flex; align-items: center; gap: 3px; width: 78px; white-space: nowrap;`;
const Pick = styled.select<{ $w: number }>`
  appearance: none; width: ${(p) => p.$w}px; height: 20px; border: 1px solid #aaa; border-radius: 0; background: #fff; padding: 0 2px; margin-right: 8px;
`;
const PickWrap = styled.label`position: relative; display: flex; align-items: center; > i { position: absolute; right: 13px; border-width: 4px 4px 0; border-top: 5px solid #222; margin: 0; }`;
const Cluster = styled.div<{ $gap: number }>`display: flex; align-items: center; gap: ${(p) => p.$gap}px; margin-right: 4px;`;
const Toggle = styled.button<{ $on?: boolean }>`
  display: grid; place-items: center; width: 24px; height: 22px; border: 1px solid ${(p) => (p.$on ? "#a9bfbb" : "transparent")};
  background: ${(p) => (p.$on ? "#c8d8d6" : "transparent")};
`;

/* ---------- work area ---------- */
const Work = styled.main`display: flex; flex: 1; min-height: 0;`;
const Strip = styled.nav`width: 32px; flex: none; background: #dcdcdc; border-right: 1px solid #b0b0b0;`;
const StripBtn = styled.button<{ $on?: boolean; $before?: number }>`
  display: grid; place-items: center; width: 100%; height: 42px; margin-top: ${(p) => p.$before || 0}px; padding-left: 3px;
  ${(p) => p.$on && css`background: #fff; border: 1px solid #aaa; border-right: 0;`}
`;
const Panel = styled.aside`display: flex; flex-direction: column; width: 332px; flex: none; border-right: 2px solid #8c9599; padding: 0 8px 6px 6px;`;
const PanelHead = styled.div`display: flex; align-items: center; justify-content: space-between; height: 29px; flex: none; padding: 1px 7px 0 4px; font-size: 12px;`;
const MaxBox = styled.button`width: 12px; height: 10px; border: 1px solid #111; border-top-width: 2px;`;
const TreeBox = styled.div`flex: 1; min-height: 0; display: flex; flex-direction: column; border: 1px solid #d4d4d4; padding: 0 1px 1px;`;
const TreeClip = styled.div`flex: 1; overflow: hidden;`;
const Tree = styled.table`
  width: 100%; table-layout: fixed; border-collapse: separate; border-spacing: 0; font-size: 12px;
  th { height: 21px; padding: 0 6px; text-align: left; font-weight: 400; background: #efefef; border-right: 1px solid #d4d4d4; border-bottom: 1px solid #d4d4d4; overflow: hidden; white-space: nowrap; }
  td { height: 20px; padding: 0; border-right: 1px solid #e6e6e6; border-bottom: 1px solid #e6e6e6; }
  tbody tr:nth-child(even) { background: #fafafa; }
  th:last-child, td:last-child { border-right: 0; }
`;
const SortMark = styled.i`display: inline-block; border: 5px solid transparent; border-bottom: 6px solid #222; border-top: 0; margin-left: 18px; vertical-align: 1px;`;
const NodeCell = styled.div<{ $dim?: boolean; $bold?: boolean }>`
  display: flex; align-items: center; height: 19px; white-space: nowrap; overflow: hidden; gap: 3px;
  color: ${(p) => (p.$dim ? "#999" : "#222")}; font-weight: ${(p) => (p.$bold ? 700 : 400)};
`;
const Branch = styled.svg`display: block; flex: none; height: 20px;`;
const Check = styled.input`
  appearance: none; flex: none; width: 12px; height: 12px; margin: 0; border: 1px solid #000; background: #fff; display: grid; place-items: center;
  &::after { content: ""; width: 9px; height: 8px; background: #16b02c; clip-path: polygon(0 50%, 20% 30%, 38% 50%, 85% 0, 100% 10%, 45% 100%, 25% 100%); }
`;
const OkMark = styled.td`padding-left: 6px !important;`;
const HScroll = styled.div`height: 16px; flex: none; background: #efefef; padding: 7px 80px 0 17px; > div { height: 2px; background: #888; }`;
const Splitter = styled.div`height: 5px; flex: none; border: 1px solid #a9a9a9; background: #dcdcdc; margin-top: 1px;`;
const Fold = styled.button`
  display: flex; align-items: center; justify-content: space-between; height: 24px; flex: none; padding: 2px 6px 0 7px;
  border-bottom: 2px solid #cfcfcf; color: #2b86b8; font-size: 14px;
`;

const View = styled.section`position: relative; flex: 1; min-width: 0; background: #dfe0e1; overflow: hidden;`;
const Scene = styled.svg`position: absolute; inset: 0; width: 100%; height: 100%; display: block;`;
const Tip = styled.div`
  position: absolute; left: 1099px; top: 547px; height: 24px; padding: 0 7px; font-size: 12px; line-height: 22px; color: #6a4f20; white-space: nowrap;
  background: rgba(242, 222, 180, .88); border: 1px solid #f6ecd4; border-color: #f6ecd4 #b9a070 #b9a070 #f6ecd4; box-shadow: 2px 2px 3px rgba(60, 40, 0, .45);
`;
const HintBox = styled.div`position: absolute; left: 1185px; top: 529px; width: 18px; height: 18px; background: #fff; border: 1px solid #ccc; display: grid; place-items: center;`;
const UsbBadge = styled.button`position: absolute; right: 358px; top: 74px; width: 50px; height: 50px; border-radius: 4px; background: #5a5b5c; display: grid; place-items: center;`;

const Dialog = styled.div`position: absolute; left: 1195px; top: 456px; width: 227px; background: #e6e6e6; border: 1px solid #b4b4b4; border-top: 0; padding-bottom: 12px;`;
const DialogHead = styled.header`display: flex; align-items: center; gap: 8px; height: 30px; padding: 0 9px; background: #5c8680; color: #fff; font-size: 12px; margin: 0 -1px;`;
const FilterRow = styled.div`display: flex; gap: 2px; margin: 4px 8px 2px 9px; padding-bottom: 2px; border-bottom: 1px solid #d0d0d0;`;
const FilterBtn = styled.button<{ $on?: boolean; $off?: boolean }>`
  display: grid; place-items: center; width: 32px; height: 32px; background: ${(p) => (p.$on ? "#ffecb0" : "#e9e9e9")};
  border: 1px solid ${(p) => (p.$on ? "#ffc84a" : p.$off ? "#cfcfcf" : "#a9a9a9")};
`;
const PickList = styled.div`display: flex; height: 158px; margin: 3px 9px 0; padding: 1px; border: 1px solid #d8d8d8; background: #fff; overflow: hidden;`;
const PickTable = styled.table`
  flex: none; width: 186px; table-layout: fixed; border-collapse: separate; border-spacing: 0; font-size: 12px; height: min-content;
  td { height: 20px; padding: 0 0 0 4px; white-space: nowrap; border-right: 1px solid #e8e8e8; border-bottom: 1px solid #e8e8e8; line-height: 19px; }
  tr:nth-child(even) { background: #fafafa; }
  tr:first-child { background: #3398ff; color: #fff; outline: 1px dotted #603000; outline-offset: -1px; }
`;
const VScroll = styled.div`flex: 1; margin-left: 2px; background: #efefef; padding: 17px 0 0 7px; > div { width: 2px; height: 53px; background: #888; }`;

const Ime = styled.div`
  position: absolute; right: 0; bottom: 31px; display: flex; align-items: center; justify-content: space-between; height: 26px; width: 170px; padding: 0 0 0 24px;
  background: #fff; border: 1px solid #a9c4e6; border-right: 0; border-radius: 6px 0 0 6px;
`;
const ImeLogo = styled.div`
  position: absolute; left: -9px; top: -4px; width: 29px; height: 29px; border-radius: 5px; background: #f4511e; transform: rotate(-10deg);
  color: #fff; font: 700 30px/29px "Liberation Sans", sans-serif; text-align: center;
`;
const ImeKey = styled.button`width: 24px; height: 24px; display: grid; place-items: center; color: #0b6fd6; font: 400 19px/24px "Liberation Sans", sans-serif;`;
const Meter = styled.svg`position: absolute; right: 0; bottom: -4px; width: 14px; height: 76px;`;

const Status = styled.footer`position: relative; display: flex; align-items: center; height: 24px; flex: none; border-top: 1px solid #a4a6a8; border-bottom: 2px solid #e6e6e6; padding: 0 3px; font-weight: 700;`;
const StatusCue = styled.span`position: absolute; left: 1226px; top: 2px; font-weight: 500;`;
const Mark = styled.span`margin-left: auto; display: flex; align-items: center; font: 400 14px/22px "Liberation Serif", "Noto Sans CJK SC", serif; color: #777;`;
const Chips = styled.span`position: absolute; right: 55px; top: 3px; display: flex; gap: 4px; opacity: .6;`;
const Chip = styled.i<{ $c: string }>`width: 16px; height: 16px; border: 1px solid #3a8fc8; background: ${(p) => p.$c};`;

/* ---------- 3D part ---------- */
const E = { stroke: "#3a2c14", strokeWidth: 1, strokeLinejoin: "round" as const };
const face = "#ffc61a";
const wall = "#b97000";
const dark = "#6a3d00";

const BoltHole = ({ x, y }: { x: number; y: number }) => (
  <g transform={`translate(${x} ${y})`}>
    <path d="M1143 690C1143 655 1172 627 1206 627S1267 660 1267 694 1242 757 1209 757 1143 727 1143 690Z" fill="url(#bore)" {...E} />
  </g>
);
const bgHole = (x: number, y: number) =>
  `M${1168 + x} ${640 + y}C${1152 + x} ${651 + y} ${1143 + x} ${669 + y} ${1143 + x} ${690 + y}C${1143 + x} ${727 + y} ${1174 + x} ${756 + y} ${1212 + x} ${756 + y}C${1223 + x} ${748 + y} ${1235 + x} ${732 + y} ${1235 + x} ${704 + y}C${1235 + x} ${672 + y} ${1206 + x} ${639 + y} ${1168 + x} ${640 + y}Z`;

const Model = () => (
  <Scene viewBox="364 180 2196 1236" preserveAspectRatio="xMidYMid slice" role="img" aria-label="model">
    <defs>
      <linearGradient id="bg" gradientUnits="userSpaceOnUse" x1="0" y1="180" x2="0" y2="1416">
        <stop offset="0" stopColor="#b3b4b6" /><stop offset=".28" stopColor="#c8c9cb" /><stop offset=".6" stopColor="#dcddde" /><stop offset=".82" stopColor="#e6e7e9" /><stop offset="1" stopColor="#e7e8ea" />
      </linearGradient>
      <linearGradient id="bore" gradientUnits="userSpaceOnUse" x1="1190" y1="630" x2="1215" y2="757">
        <stop offset="0" stopColor={dark} /><stop offset=".2" stopColor={dark} /><stop offset=".5" stopColor="#a56300" /><stop offset=".8" stopColor="#d07a00" /><stop offset="1" stopColor="#f39200" />
      </linearGradient>
      <linearGradient id="bandL" gradientUnits="userSpaceOnUse" x1="1350" y1="0" x2="1556" y2="0">
        <stop offset="0" stopColor="#bb6e00" /><stop offset=".18" stopColor="#dc8300" /><stop offset=".36" stopColor="#ff9d0a" /><stop offset=".6" stopColor="#ffab10" /><stop offset="1" stopColor="#ffb208" />
      </linearGradient>
      <linearGradient id="bandL2" gradientUnits="userSpaceOnUse" x1="1380" y1="0" x2="1592" y2="0">
        <stop offset="0" stopColor="#bb6e00" /><stop offset=".18" stopColor="#dc8300" /><stop offset=".4" stopColor="#ff9d0a" /><stop offset=".6" stopColor="#ffab10" /><stop offset="1" stopColor="#ffb208" />
      </linearGradient>
      <linearGradient id="bandR" gradientUnits="userSpaceOnUse" x1="1680" y1="0" x2="1800" y2="0">
        <stop offset="0" stopColor="#ffb00e" /><stop offset=".5" stopColor="#ff9c05" /><stop offset=".8" stopColor="#fb9300" /><stop offset="1" stopColor="#e08300" />
      </linearGradient>
      <linearGradient id="bandR2" gradientUnits="userSpaceOnUse" x1="1718" y1="0" x2="1840" y2="0">
        <stop offset="0" stopColor="#ffb00e" /><stop offset=".5" stopColor="#ff9c05" /><stop offset=".8" stopColor="#f49000" /><stop offset="1" stopColor="#c87400" />
      </linearGradient>
      <linearGradient id="ring" gradientUnits="userSpaceOnUse" x1="1430" y1="640" x2="1540" y2="1180">
        <stop offset="0" stopColor="#f09000" /><stop offset=".12" stopColor="#d67d00" /><stop offset=".4" stopColor="#bd6e00" /><stop offset=".62" stopColor="#a16000" /><stop offset=".82" stopColor="#7c4900" /><stop offset=".95" stopColor={dark} />
      </linearGradient>
      <linearGradient id="tunnel" gradientUnits="userSpaceOnUse" x1="1740" y1="810" x2="1785" y2="1050">
        <stop offset="0" stopColor="#633800" /><stop offset=".35" stopColor="#935600" /><stop offset=".6" stopColor="#b96d00" /><stop offset=".85" stopColor="#d07a00" /><stop offset=".99" stopColor="#f09000" />
      </linearGradient>
      <linearGradient id="pinhole" x1="0" y1="0" x2="0" y2="1">
        <stop offset="0" stopColor={dark} /><stop offset=".15" stopColor="#7a4700" /><stop offset=".45" stopColor="#ff9a00" /><stop offset=".64" stopColor="#fff02c" /><stop offset=".85" stopColor="#ffd200" /><stop offset="1" stopColor="#ffb400" />
      </linearGradient>
      <linearGradient id="sideTop" gradientUnits="userSpaceOnUse" x1="1140" y1="575" x2="1060" y2="700">
        <stop offset="0" stopColor="#f39200" /><stop offset=".5" stopColor="#d07a00" /><stop offset="1" stopColor="#c07000" />
      </linearGradient>
      <linearGradient id="sideBot" gradientUnits="userSpaceOnUse" x1="1090" y1="1275" x2="1170" y2="1390">
        <stop offset="0" stopColor="#b06a00" /><stop offset=".6" stopColor="#7a4700" /><stop offset="1" stopColor={dark} />
      </linearGradient>
    </defs>
    <rect x="364" y="180" width="2196" height="1236" fill="url(#bg)" />

    {/* plate thickness */}
    <path d="M1187 564L1148 575C1080 592 1046 650 1049 706L1079 1271 1111 1261 1082 695Z" fill={wall} {...E} />
    <path d="M1082 695L1049 706C1046 650 1080 592 1148 575L1187 564C1120 572 1080 630 1082 695Z" fill="url(#sideTop)" {...E} />
    <path d="M1240 1387L1388 1340H1957L2009 1371C1995 1380 1980 1384 1964 1384L1790 1387V1384H1713C1700 1379 1650 1377 1590 1379C1540 1381 1500 1388 1476 1390L1388 1392 1376 1396 1194 1398Z" fill={dark} {...E} />
    <path d="M1079 1271C1082 1340 1130 1395 1210 1398L1240 1387C1170 1385 1114 1325 1111 1261Z" fill="url(#sideBot)" {...E} />

    {/* plate face */}
    <path d="M1082 695C1080 620 1130 565 1200 563L1345 561C1410 552 1480 544 1554 541L1555 547 1660 545 1678 538C1730 537 1770 542 1799 551L1942 549C2010 549 2072 590 2076 675L2106 1240C2110 1320 2050 1372 1957 1373L1841 1375C1810 1364 1770 1361 1721 1362L1703 1368 1583 1371 1597 1365C1530 1366 1450 1374 1388 1384L1240 1387C1170 1385 1114 1325 1111 1261Z" fill={face} {...E} />

    <BoltHole x={0} y={0} /><BoltHole x={30} y={566} /><BoltHole x={747} y={-14} /><BoltHole x={777} y={551} />
    {[[0, 0], [30, 566], [747, -14], [777, 551]].map(([x, y]) => <path key={x} d={bgHole(x, y)} fill="url(#bg)" />)}

    {/* cylindrical bands */}
    <path d="M1345 561C1410 552 1480 544 1554 541L1562 700 1380 790 1357 783Z" fill="url(#bandL)" {...E} />
    <path d="M1377 1150L1592 1240 1597 1365C1530 1366 1450 1374 1388 1384Z" fill="url(#bandL2)" {...E} />
    <path d="M1660 545L1678 538 1684 660 1668 660Z" fill={wall} {...E} />
    <path d="M1678 538C1730 537 1770 542 1799 551L1803 640 1684 660Z" fill="url(#bandR)" {...E} />
    <path d="M1715 1246L1833 1200 1841 1375C1810 1364 1770 1361 1721 1362Z" fill="url(#bandR2)" {...E} />

    {/* right ribs and boss flank */}
    <path d="M1949 834C1975 880 1978 975 1959 1027Z" fill={face} {...E} />
    <path d="M1967 903L2088 916 2093 1000 1969 987C1972 960 1971 930 1967 903Z" fill="#ff9900" {...E} />
    <path d="M1969 987L2093 1000 1965 1003Z" fill={dark} {...E} />

    {/* boss flank */}
    <path d="M1562 657C1490 668 1410 730 1357 783C1325 820 1310 860 1306 916L1308 1016C1320 1075 1345 1120 1377 1162C1450 1205 1520 1238 1592 1249L1700 1208 1560 1128 1562 657Z" fill="url(#ring)" {...E} />

    {/* left rib */}
    <path d="M1094 935L1357 912C1354 945 1355 970 1362 996L1099 1019Z" fill="#ffa80f" {...E} />
    <path d="M1099 1019L1362 996 1308 1016Z" fill={dark} {...E} />

    {/* boss front face */}
    <path d="M1461 728C1410 780 1387 850 1389 925C1392 1020 1430 1100 1484 1152Z" fill={face} {...E} />
    <path d="M1461 728L1527 704 1550 1128 1484 1152Z" fill={wall} {...E} />
    <path d="M1527 704C1565 665 1610 632 1668 617L1672 700 1680 860 1691 1025 1700 1208C1645 1196 1595 1165 1550 1128Z" fill={face} {...E} />
    <path d="M1744 635L1792 615 1802 798 1786 804 1740 804Z" fill={wall} {...E} />
    <path d="M1792 615C1845 625 1895 650 1942 695L1964 1120C1925 1158 1875 1188 1824 1206L1814 1022C1850 1000 1870 960 1870 913C1868 865 1845 820 1802 798Z" fill={face} {...E} />
    <path d="M1693 1067L1814 1022 1824 1206 1715 1246 1721 1362 1703 1368Z" fill={wall} {...E} />
    <path d="M1592 1249L1695 1210 1703 1368 1583 1371 1597 1365Z" fill={face} {...E} />
    <path d="M1660 870L1786 804 1802 798C1845 820 1868 865 1870 913C1870 960 1850 1000 1814 1022L1693 1067 1692 1035 1697 978Z" fill="url(#tunnel)" {...E} />
    <path d="M1626 870C1618 925 1632 985 1691 1025L1692 1035C1696 1015 1693 1000 1697 978C1697 955 1690 945 1690 930C1690 905 1684 888 1674 875Z" fill="url(#bg)" {...E} />

    <ellipse cx="1506" cy="928" rx="13" ry="43" fill="url(#pinhole)" {...E} />
    <path d="M1823 900C1823 880 1828 876 1834 881C1853 893 1855 935 1841 956C1835 966 1828 966 1826 955Z" fill="url(#pinhole)" {...E} />
    <path d="M1528 704L1551 1128" stroke="#ffdc40" strokeWidth="3" />

    {/* datum frame and axes */}
    <g fill="none" stroke="#d8d4c8" strokeWidth="1.4" opacity=".85">
      <path d="M1561 912H1622L1625 973 1645 972M1561 912L1578 906 1582 972 1561 979M1582 972H1640M1556 890V850" />
      <path d="M1555 847l-3 15h6z" fill="#c8c4b8" />
      <path d="M1551 836l3 4v5M1557 836l-3 4" />
      <path d="M1600 960h6l-6 8h6" />
    </g>
    <path d="M1519 938L1600 937 1604 1020 1524 1023Z" fill="rgba(110,140,100,.36)" stroke="#1592ff" strokeWidth="2" />
    <circle cx="1597" cy="967" r="3" fill="#7c8c98" />
    <path d="M1561 979L1558 915" stroke="#2c9c3c" strokeWidth="3.500" />
    <path d="M1556 898l-5 20h10z" fill="#2c9c3c" />
    <path d="M1554 886l3 4 3-4M1557 890v5" fill="none" stroke="#2c9c3c" strokeWidth="1.4" />
    <path d="M1561 979L1622 978" stroke="#d23030" strokeWidth="3.500" />
    <path d="M1640 978l-20-4v8z" fill="#c22c2c" />
    <path d="M1643 974l7 9M1650 974l-7 9" stroke="#e23030" strokeWidth="1.4" />
    <path d="M1640 971l6-1-8 8M1640 978H1673" fill="none" stroke="#7a7af0" strokeWidth="1.6" />
    <path d="M1688 977l-15-3v6z" fill="#1414d8" />
    <path d="M1692 973l6 9M1698 973l-6 9" stroke="#3030e0" strokeWidth="1.4" />
    <path d="M1738 912h6M1749 912h6M1746 904v5M1746 915v5" stroke="#b05a20" opacity=".6" />
    <path d="M1528 698l5 5-5 5-5-5z" fill="#1a1aff" stroke="#e0102a" strokeWidth="2" />

    {/* view triad */}
    <g>
      <path d="M437 1306L451 1303 475 1302 477 1335 440 1337Z" fill="rgba(190,190,190,.5)" stroke="#b4b4b4" />
      <path d="M437 1306L466 1306 475 1302M466 1306L468 1337M446 1304V1334" fill="none" stroke="#b4b4b4" />
      <path d="M438 1336L437 1300" stroke="#2c9c3c" strokeWidth="3" /><path d="M437 1286l-4 13h8z" fill="#2c9c3c" />
      <path d="M440 1337H478" stroke="#d23030" strokeWidth="3" /><path d="M488 1336l-12-4v8z" fill="#d23030" />
      <path d="M440 1336L450 1333" stroke="#1238c0" strokeWidth="3" /><ellipse cx="451" cy="1332" rx="5" ry="3.500" fill="#1238c0" />
      <circle cx="439" cy="1337" r="4" fill="#ccc" stroke="#888" />
      <g fontFamily="Liberation Sans" fontSize="13"><text x="432" y="1285" fill="#2c9c3c">Y</text><text x="490" y="1341" fill="#d23030">X</text><text x="454" y="1335" fontSize="10" fill="#6a7af0">Z</text></g>
    </g>
  </Scene>
);

/* ---------- data ---------- */
type Row = { icon: string; text: string; dim?: boolean; bold?: boolean };
const history: Row[] = [
  { icon: "csys", text: "基准坐标系 (0)" },
  { icon: "skt", text: '草图 (1) "SKETCH_0...', dim: true },
  { icon: "ext", text: "拉伸 (2)" },
  { icon: "rbld", text: "边倒圆 (3)" },
  { icon: "drill", text: "简单孔 (4)" },
  { icon: "drill", text: "简单孔 (5)" },
  { icon: "skt", text: '草图 (6) "SKETCH_0...', dim: true },
  { icon: "ext", text: "拉伸 (7)" },
  { icon: "skt", text: '草图 (8) "SKETCH_0...', dim: true },
  { icon: "ext", text: "拉伸 (9)" },
  { icon: "skt", text: '草图 (10) "SKETCH_...', dim: true },
  { icon: "ext", text: "拉伸 (11)" },
  { icon: "skt", text: '草图 (12) "SKETCH_...', dim: true },
  { icon: "ext", text: "拉伸 (13)" },
  { icon: "skt", text: '草图 (14) "SKETCH_...', dim: true },
  { icon: "ext", text: "拉伸 (15)" },
  { icon: "drill", text: "简单孔 (16)" },
  { icon: "drill", text: "简单孔 (17)" },
  { icon: "skt", text: '草图 (18) "SKETCH_...', dim: true },
  { icon: "rib", text: "筋板 (19)" },
  { icon: "rib", text: "筋板 (20)" },
  { icon: "sktOn", text: '草图 (21) "SKETCH...', bold: true },
];
const roots = [
  { icon: "clock", text: "历史记录模式", mark: "" },
  { icon: "views", text: "模型视图", mark: "+" },
  { icon: "camera", text: "摄像机", mark: "+", ok: true },
  { icon: "folderEq", text: "用户表达式", mark: "" },
  { icon: "folder", text: "模型历史记录", mark: "-" },
];
const picks = [
  ["snapEnd", "起点 - 边 / 拉伸(9)"], ["snapEnd", "终点 - 边 / 拉伸(9)"], ["snapEnd", "终点 - 边 / 拉伸(7)"], ["snapCenter", "圆弧中心 - 边 / 拉伸(7)"],
  ["snapEnd", "起点 - 边 / 拉伸(7)"], ["snapEnd", "起点 - 边 / 拉伸(9)"], ["snapEnd", "终点 - 边 / 拉伸(9)"], ["ext", "拉伸(7)"],
];
const gallery = ["profile", "rect", "line", "arc", "circle", "plus", "fillet", "corner", "trim", "extend", "mkcorner", "loop", "moveCurve", "offsetCurve", "arcTri", "chamTri"];
const toolGroups: { w: number; name: string; rows: string[][] }[] = [
  { w: 103, name: "标准化工具 - G...", rows: [["snapBox", "layers", "layerList", "|", "tag"], ["blueTick", "hammerTick", "goldTick", "|", "partEdit"]] },
  { w: 52, name: "齿轮...", rows: [["gear1", "gear2"], ["listHand"]] },
  { w: 58, name: "弹簧...", rows: [["spring", "spring2"], ["disc", "|", "springCut"]] },
  { w: 52, name: "加工...", rows: [["procTick", "procList"], ["procTable", "csys"]] },
  { w: 98, name: "建模工具 - G...", rows: [["tri", "gridTri", "foldPts", "foldLink"], ["note", "dimBrush", "|", "find"]] },
  { w: 29, name: "?..", rows: [["gold"], ["gold"]] },
  { w: 288, name: "尺寸快速格式化工具 - GC工具箱", rows: [["dimFrame", "|", "d1", "d2", "d3", "d4", "d5", "d6", "d7", "d8", "d9", "d10", "d11"], ["leader1", "leader2", "|", "dia1", "dia2", "back"]] },
];
const snaps: [string, boolean][] = [
  ["snapAll", true], ["snapEnd", true], ["snapMid", true], ["snapCurve", false], ["snapPole", true], ["snapCross", false],
  ["snapCenter", true], ["snapQuad", false], ["snapPoint", true], ["snapMid", true], ["snapFace", false], ["snapGrid", false],
];

const RootLines = ({ i, mark }: { i: number; mark: string }) => (
  <Branch width="16" viewBox="0 0 16 20">
    <path d={`M9.500 ${i === 0 ? 10 : 0}V${i === 4 ? 10 : 20}M9.500 10.500H16`} stroke="#999" strokeDasharray="1 1" fill="none" />
    {mark && <g><rect x="5.500" y="6.500" width="8" height="8" fill="#fff" stroke="#bbb" /><path d={mark === "+" ? "M7 10.500h5M9.500 8v5" : "M7 10.500h5"} stroke="#000" /></g>}
  </Branch>
);
const LeafLines = ({ last }: { last: boolean }) => (
  <Branch width="37" viewBox="0 0 37 20"><path d={`M28.500 0V${last ? 10 : 20}M28.500 10.500H37`} stroke="#999" strokeDasharray="1 1" fill="none" /></Branch>
);
const Tick = () => <Svg $s={13} viewBox="0 0 24 24"><path d="M1 12l4-3 5 5L20 2l3 2-12 19H8z" fill="#16b02c" /></Svg>;

export default function App() {
  return (
    <>
      <Global />
      <Page>
        <TitleBar>
          <Brand>NX</Brand><Rule />
          <Tool $w={22}><Icon n="save" s={15} /></Tool><Rule />
          <Tool $w={12}><Icon n="undo" s={14} /></Tool><Tool $w={22}><Caret /></Tool><Tool $w={14}><Icon n="redo" s={14} /></Tool>
          <Rule />
          <Tool $w={18}><Icon n="cut" s={15} /></Tool><Tool $w={28}><Icon n="copy" s={15} /></Tool><Tool $w={18}><Icon n="paste" s={16} /></Tool><Rule />
          <Tool $w={20}><Icon n="profile" s={15} /></Tool><Tool $w={14}><Caret /></Tool><Rule />
          <Tool $w={16}><Icon n="eraser" s={15} /></Tool><Rule />
          <WindowMenu><Icon n="window" s={15} />窗口<Caret /><Caret /></WindowMenu>
          <Title>{"专业CNC培训.视频教程请联系QQ-434324903 UG10.0 - 建模 - [_model15.prt （修改的） ]"}</Title>
          <Spacer />
          <Maker>SIEMENS</Maker>
          <WinButtons><Tool $w={13}><Icon n="min" s={12} /></Tool><Tool $w={13}><Icon n="restore" s={12} /></Tool><Tool $w={13}><Icon n="close" s={11} /></Tool></WinButtons>
        </TitleBar>

        <TabBar>
          <Tab $kind="file">文件(F)</Tab>
          <Tab $kind="on">主页</Tab>
          {["曲线", "分析", "视图", "渲染", "工具"].map((t) => <Tab key={t}>{t}</Tab>)}
          <Tab $kind="wide">应用模块</Tab>
          <Spacer />
          <TabTools>
            <Search placeholder="查找命令" aria-label="查找命令" />
            <Tool $w={13}><Icon n="help" s={14} /></Tool>
            <WinButtons><Tool $w={13}><Icon n="min" s={11} /></Tool><Tool $w={13}><Icon n="restore" s={12} /></Tool><Tool $w={13} disabled><Icon n="closeDim" s={10} /></Tool></WinButtons>
          </TabTools>
          <Upload><UploadMark><Icon n="cloud" s={18} /></UploadMark>拖拽上传</Upload>
        </TabBar>

        <Ribbon>
          <Group $w={500}>
            <GroupBody $pad={8}>
              <Big n="sketch" label="草图" w={42} /><Big n="finish" label="完成草图" w={50} />
              <Gallery>{gallery.map((g) => <Tool key={g} $w={32} aria-label={g}><Icon n={g} s={21} /></Tool>)}</Gallery>
              <GalleryNav><Caret /><Caret /><Caret /></GalleryNav>
              <Big n="rapidDim" label="快速尺寸" w={60} caret /><Big n="more" label="更多" w={44} caret framed />
            </GroupBody>
            <GroupFoot><GroupName>直接草图</GroupName><Caret /></GroupFoot>
          </Group>
          <Group $w={369}>
            <GroupBody $pad={8}>
              <Big n="datum" label="基准平面" w={52} caret /><Big n="extrude" label="拉伸" w={40} caret /><Big n="hole" label="孔" w={38} />
              <Stack $w={76} $pad={8}>
                <RowBtn><Icon n="pattern" s={16} />阵列特征</RowBtn><RowBtn><Icon n="unite" s={16} />合并<Caret /></RowBtn><RowBtn><Icon n="shell" s={16} />抽壳</RowBtn>
              </Stack>
              <Big n="blend" label="边倒圆" w={46} caret />
              <Stack $w={64} $pad={2}>
                <RowBtn><Icon n="chamfer" s={16} />倒斜角</RowBtn><RowBtn><Icon n="trimBody" s={16} />修剪体</RowBtn><RowBtn><Icon n="draft" s={16} />拔模</RowBtn>
              </Stack>
              <Big n="featMore" label="更多" w={40} caret framed />
            </GroupBody>
            <GroupFoot><GroupName>特征</GroupName><Caret /></GroupFoot>
          </Group>
          <Group $w={172}>
            <GroupBody $pad={6}>
              <Big n="moveFace" label="移动面" w={46} />
              <Stack $w={76} $pad={2}>
                <RowBtn><Icon n="offRegion" s={16} />偏置区域</RowBtn><RowBtn><Icon n="repFace" s={16} />替换面</RowBtn><RowBtn><Icon n="delFace" s={16} />删除面</RowBtn>
              </Stack>
              <Big n="syncMore" label="更多" w={40} caret framed />
            </GroupBody>
            <GroupFoot><GroupName>同步建模</GroupName><Caret /></GroupFoot>
          </Group>
          <Group $w={43}><GroupBody><Big n="surface" label="曲面" w={42} caret /></GroupBody></Group>
          {toolGroups.map((g) => (
            <Group key={g.name} $w={g.w}>
              <GroupBody><Mini rows={g.rows} /></GroupBody>
              <GroupFoot><GroupName>{g.name}</GroupName><Caret /></GroupFoot>
            </Group>
          ))}
        </Ribbon>

        <SelBar>
          <MenuBtn><Icon n="menu" s={17} /><span>菜单(<u>M</u>)</span><Caret /></MenuBtn><Rule $h={24} />
          <PickWrap><Pick $w={132} aria-label="过滤器"><option>没有选择过滤器</option></Pick><Caret /></PickWrap>
          <PickWrap><Pick $w={141} aria-label="范围"><option>整个装配</option></Pick><Caret /></PickWrap>
          <Cluster $gap={0}>
            <Toggle><Icon n="cubeGray" s={16} /></Toggle><Toggle><Icon n="filterGray" s={16} /></Toggle><Toggle><Icon n="filterRed" s={16} /></Toggle><Caret />
            <Toggle><Icon n="undoGray" s={16} /></Toggle><Toggle><Icon n="handGray" s={16} /></Toggle><Toggle><Icon n="marquee" s={16} /></Toggle><Caret />
            <Toggle><Icon n="bodyGray" s={16} /></Toggle><Toggle><Icon n="cubeBlue" s={16} /></Toggle>
          </Cluster>
          <Cluster $gap={1}>{snaps.map(([n, on], i) => <Toggle key={i} $on={on} aria-pressed={on} aria-label={n}><Icon n={n} s={16} /></Toggle>)}</Cluster>
          <Rule $h={24} />
          <Cluster $gap={1}>
            <Toggle><Icon n="fit" s={16} /></Toggle><Toggle><Icon n="pan" s={16} /></Toggle><Toggle><Icon n="rotate" s={15} /></Toggle><Toggle><Icon n="layout" s={15} /></Toggle><Caret />
            <Toggle><Icon n="shadeMode" s={16} /></Toggle><Caret /><Toggle><Icon n="shaded" s={16} /></Toggle><Caret /><Toggle><Icon n="section" s={16} /></Toggle><Caret />
          </Cluster>
          <Rule $h={24} />
          <Spacer /><Caret />
        </SelBar>

        <Work>
          <Strip>
            <StripBtn $before={-8}><Icon n="gearSmall" s={14} /></StripBtn>
            <StripBtn $before={8}><Icon n="asm" s={22} /></StripBtn>
            <StripBtn><Icon n="constraint" s={22} /></StripBtn>
            <StripBtn $on><Icon n="partNav" s={22} /></StripBtn>
            <StripBtn><Icon n="books" s={23} /></StripBtn>
            <StripBtn $before={12}><Icon n="info" s={23} /></StripBtn>
            <StripBtn $before={12}><Icon n="globe" s={22} /></StripBtn>
            <StripBtn $before={12}><Icon n="clock" s={22} /></StripBtn>
            {["rainbow", "wand", "tools", "roles"].map((n) => <StripBtn key={n} aria-label={n}><Icon n={n} s={22} /></StripBtn>)}
          </Strip>

          <Panel>
            <PanelHead>部件导航器<MaxBox aria-label="最大化" /></PanelHead>
            <TreeBox>
              <TreeClip>
                <Tree>
                  <colgroup><col width="200" /><col width="100" /><col /></colgroup>
                  <thead><tr><th>名称<SortMark /></th><th>最新</th><th>附</th></tr></thead>
                  <tbody>
                    {roots.map((r, i) => (
                      <tr key={r.text}>
                        <td><NodeCell><RootLines i={i} mark={r.mark} />{r.ok && <Tick />}<Icon n={r.icon} s={16} />{r.text}</NodeCell></td><td /><td />
                      </tr>
                    ))}
                    {history.map((r, i) => (
                      <tr key={r.text}>
                        <td>
                          <NodeCell $dim={r.dim} $bold={r.bold}>
                            <LeafLines last={i === history.length - 1} /><Check type="checkbox" defaultChecked aria-label={r.text} /><Icon n={r.icon} s={15} />{r.text}
                          </NodeCell>
                        </td>
                        <OkMark><Tick /></OkMark><td />
                      </tr>
                    ))}
                    {Array.from({ length: 32 }, (_, i) => <tr key={i}><td /><td /><td /></tr>)}
                  </tbody>
                </Tree>
              </TreeClip>
              <HScroll><div /></HScroll>
            </TreeBox>
            <Splitter />
            {["相依性", "细节", "预览"].map((t) => <Fold key={t}>{t}<Icon n="chevron" s={11} /></Fold>)}
          </Panel>

          <View>
            <Model />
            <UsbBadge aria-label="USB">
              <svg width="24" height="28" viewBox="0 0 24 28"><path d="M5 0h14v6H5z" fill="#f0f3f2" /><path d="M7 2h4v2H7zM13 2h4v2h-4z" fill="#5a5b5c" /><path d="M1 5h22v9a11 13 0 0 1-22 0z" fill="#f0f3f2" /></svg>
            </UsbBadge>
            <HintBox><Icon n="segment" s={14} /></HintBox>
            <Tip>边 / 拉伸(9)</Tip>
            <Dialog role="dialog" aria-label="快速拾取">
              <DialogHead>快速拾取<Spacer /><Icon n="pin" s={13} />
                <button aria-label="关闭"><Svg $s={12} viewBox="0 0 24 24"><path d="M2 2l20 20M22 2L2 22" stroke="#fff" strokeWidth="4" /></Svg></button>
              </DialogHead>
              <FilterRow>
                <FilterBtn $on><Icon n="qpTarget" /></FilterBtn>
                <FilterBtn><Icon n="qpCurve" s={23} /></FilterBtn><FilterBtn><Icon n="qpFeat" s={23} /></FilterBtn><FilterBtn><Icon n="qpBody" s={22} /></FilterBtn>
                <FilterBtn $off disabled><Icon n="qpComp" s={24} /></FilterBtn><FilterBtn $off disabled><Icon n="qpPmi" s={22} /></FilterBtn>
              </FilterRow>
              <PickList>
                <PickTable>
                  <colgroup><col width="21" /><col width="24" /><col /></colgroup>
                  <tbody>{picks.map(([n, t], i) => <tr key={i}><td>{i + 1}</td><td><Icon n={n} s={15} /></td><td>{t}</td></tr>)}</tbody>
                </PickTable>
                <VScroll><div /></VScroll>
              </PickList>
            </Dialog>
            <Ime>
              <ImeLogo>S</ImeLogo>
              <ImeKey>A</ImeKey>
              <ImeKey><svg width="12" height="12" viewBox="0 0 12 12" fill="#0b6fd6"><circle cx="2" cy="3" r="2" /><path d="M8 6h4v2c0 2-1 3-3 4l-1-1 2-2H8z" /></svg></ImeKey>
              <ImeKey><svg width="14" height="16" viewBox="0 0 14 16" fill="#0b6fd6"><rect x="4" y="0" width="6" height="10" rx="3" /><path d="M1 6c0 9 12 9 12 0M7 13v3" fill="none" stroke="#0b6fd6" strokeWidth="1.600" /></svg></ImeKey>
              <ImeKey><svg width="16" height="12" viewBox="0 0 16 12"><rect x=".7" y=".7" width="14.600" height="10.600" rx="1" fill="none" stroke="#0b6fd6" strokeWidth="1.400" /><path d="M3 4h10M3 6.500h10" stroke="#0b6fd6" strokeWidth="1.400" strokeDasharray="2 1" /><path d="M4 9h8" stroke="#0b6fd6" strokeWidth="1.400" /></svg></ImeKey>
              <ImeKey><svg width="16" height="14" viewBox="0 0 16 14" fill="#0b6fd6"><path d="M4 0c1 2 7 2 8 0l4 3-2 4-2-1v8H4V6L2 7 0 3z" /></svg></ImeKey>
              <ImeKey><svg width="14" height="14" viewBox="0 0 14 14" fill="#0b6fd6"><rect width="6" height="6" rx="2" /><rect x="8" width="6" height="6" rx="2" /><rect y="8" width="6" height="6" rx="2" /><rect x="8" y="8" width="6" height="6" rx="2" /></svg></ImeKey>
            </Ime>
            <Meter viewBox="0 0 14 76"><path d="M4 4h10v56H4z" fill="#4a4d5a" /><path d="M6 14h7M6 18h7" stroke="#aab" /><rect x="3" y="22" width="6" height="44" rx="3" fill="#4b5358" stroke="#5f6a70" /><path d="M6 46v20" stroke="#2cb0ea" strokeWidth="3" /><circle cx="6" cy="69" r="6" fill="#2cb0ea" stroke="#36424a" strokeWidth="2" /></Meter>
          </View>
        </Work>

        <Status>
          按 MB2 可浏览对象，按 MB1 可选择对象
          <StatusCue>起点 - 边 / 拉伸(9)</StatusCue>
          <Mark>UG爱好者论坛@西行寺UUz</Mark>
          <Chips><Chip $c="#8ec6ea" /><Chip $c="#d6dde2" /></Chips>
        </Status>
      </Page>
    </>
  );
}
